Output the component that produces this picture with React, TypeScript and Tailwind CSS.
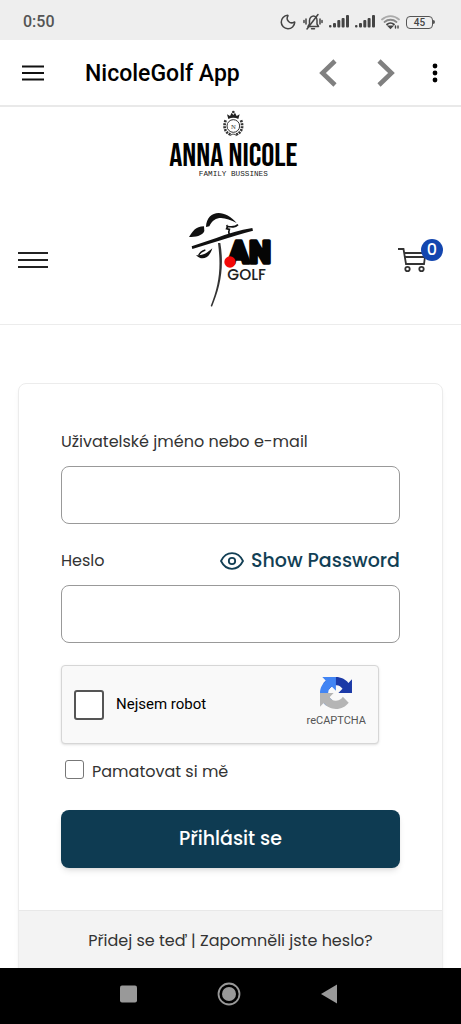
import { useState } from "react";
import { Moon } from "lucide-react";

function SignalIcon() {
  return (
    <svg className="h-4 w-5" viewBox="0 0 20 16" fill="#444">
      <rect x="0" y="11" width="2.500" height="2.500" rx="1" />
      <rect x="4" y="9" width="3" height="4.500" rx="1" />
      <rect x="8.300" y="6" width="3" height="7.500" rx="1" />
      <rect x="12.600" y="4" width="3" height="9.500" rx="1" />
      <rect x="17" y="1" width="3" height="12.500" rx="1" />
    </svg>
  );
}

function MuteIcon() {
  return (
    <svg className="h-[18px] w-5" viewBox="0 0 20 18" fill="none" stroke="#444" strokeWidth="1.500" strokeLinecap="round">
      <path d="M5 13.500h10.500L14 11V7.500C14 5 12.500 3 10.500 3S6.500 5 6.500 7.500V11z" strokeLinejoin="round" />
      <path d="M8.500 15.800h3M4 16L15 1.500M3 6v5M1 7.500v2M17 6v5M19 7.500v2" />
    </svg>
  );
}

function WifiIcon() {
  return (
    <svg className="h-4 w-[19px]" viewBox="0 0 19 16" fill="none" strokeWidth="1.800" strokeLinecap="round">
      <path d="M1 5.500C6 1 13 1 18 5.500" stroke="#aaa" />
      <path d="M3.500 8C7 5 12 5 15.500 8" stroke="#888" />
      <path d="M6 10.500c2-1.800 5-1.800 7 0" stroke="#444" />
      <path d="M8 12.500h3l-1.500 1.500z" fill="#444" stroke="#444" />
      <path d="M14.500 12v2M17 12v2" stroke="#444" strokeWidth="1.400" />
    </svg>
  );
}

function StatusBar() {
  return (
    <div className="flex h-10 shrink-0 items-center justify-between bg-[#eeeeee] pt-1 pr-[26px] pl-[23px] text-[#555]">
      <span className="text-base font-medium">0:50</span>
      <div className="flex items-center gap-[6px]">
        <Moon className="h-[18px] w-[18px] text-[#444]" />
        <MuteIcon />
        <SignalIcon />
        <SignalIcon />
        <WifiIcon />
        <div className="flex items-center">
          <span className="flex h-[13px] w-[27px] items-center justify-center rounded border border-[#555] text-[10px] font-medium text-[#444]">45</span>
          <span className="h-1 w-[2px] rounded-r bg-[#555]" />
        </div>
      </div>
    </div>
  );
}

function AppBar() {
  return (
    <header className="flex h-[67px] shrink-0 items-center border-b-2 border-[#e9e9e9] bg-white pr-[22px] pl-[22px]">
      <button type="button" aria-label="Menu">
        <svg className="h-4 w-[22px]" viewBox="0 0 22 16" stroke="#111" strokeWidth="2.200">
          <path d="M0 1.500h22M0 8h22M0 14.500h22" />
        </svg>
      </button>
      <h1 className="ml-[41px] pt-1 text-[23px] font-medium text-black">NicoleGolf App</h1>
      <div className="ml-auto flex items-center">
        <button type="button" aria-label="Back" className="mr-10">
          <svg className="h-7 w-[18px]" viewBox="0 0 18 28" fill="none" stroke="#808080" strokeWidth="4.600">
            <path d="M16 2L3.500 14 16 26" />
          </svg>
        </button>
        <button type="button" aria-label="Forward" className="mr-9">
          <svg className="h-7 w-[18px]" viewBox="0 0 18 28" fill="none" stroke="#808080" strokeWidth="4.600">
            <path d="M2 2l12.500 12L2 26" />
          </svg>
        </button>
        <button type="button" aria-label="More">
          <svg className="h-5 w-2" viewBox="0 0 8 20" fill="#000">
            <circle cx="4" cy="3" r="2.400" />
            <circle cx="4" cy="10" r="2.400" />
            <circle cx="4" cy="17" r="2.400" />
          </svg>
        </button>
      </div>
    </header>
  );
}

function FamilyLogo() {
  return (
    <svg className="h-[78px] w-[150px]" viewBox="-13 6 450 234">
      <g fill="none" stroke="#333">
        <circle cx="219" cy="63" r="19" strokeWidth="3" />
        <path d="M196 46c-7 18-4 38 18 44M242 46c7 18 4 38-18 44" strokeWidth="8" strokeDasharray="6 3" />
        <path d="M209 92c6-6 14-6 20 0" strokeWidth="3" />
      </g>
      <path d="M204 42l-4-14 9 5 5-10 5 7 5-7 5 10 9-5-4 14c-9-5-21-5-30 0z" fill="#222" />
      <circle cx="219" cy="21" r="4" fill="#333" />
      <text x="219" y="71" textAnchor="middle" className="font-['Liberation_Serif',serif] text-[20px]" fill="#333">N</text>
      <text x="219" y="184" textAnchor="middle" className="font-['Bebas_Neue','Liberation_Sans',sans-serif] text-[98px]" fill="#000">ANNA NICOLE</text>
      <text x="219" y="214" textAnchor="middle" className="font-['Liberation_Mono',monospace] text-[23px]" fill="#222">FAMILY BUSSINES</text>
    </svg>
  );
}

function GolfLogo() {
  return (
    <svg className="h-[110px] w-[110px]" viewBox="-13 0 330 330">
      <path d="M80 66C82 14 136 10 172 54C138 36 106 28 90 64z" fill="#111" />
      <path d="M74 64C48 64 40 80 29 96C47 96 70 93 75 78z" fill="#111" />
      <path d="M50 150C65 167 89 164 99 130C82 144 73 153 50 150z" fill="#111" />
      <path d="M78 135c-12 4-17 9-20 16" fill="none" stroke="#111" strokeWidth="4" />
      <path d="M37 124L111 99Q162 79 219 69L221 77Q175 89 117 108L39 132z" fill="#111" />
      <path d="M142 60q4 5 0 11l8 2q-3 6 0 16M142 64c13 2 24 5 34-5" fill="none" stroke="#111" strokeWidth="5" />
      <path d="M116 114L123 114C136 190 121 250 98 305L94 303C119 240 126 190 116 114z" fill="#333" />
      <text x="147" y="175" className="font-['Roboto','Liberation_Sans',sans-serif] text-[92px] font-black" fill="#050505" stroke="#050505" strokeWidth="10" strokeLinejoin="round">AN</text>
      <circle cx="152" cy="171" r="17" fill="#f40808" />
      <text x="144" y="225" className="font-['Poppins','Liberation_Sans',sans-serif] text-[46px] font-medium" fill="#222">GOLF</text>
    </svg>
  );
}

function ShopHeader() {
  return (
    <div className="border-b border-[#ececec] px-[18px] pb-[9px]">
      <div className="flex justify-center">
        <FamilyLogo />
      </div>
      <div className="mt-5 grid grid-cols-3 items-center">
        <button type="button" aria-label="Shop menu" className="justify-self-start">
          <svg className="h-[18px] w-[30px]" viewBox="0 0 30 18" stroke="#222" strokeWidth="2">
            <path d="M0 2h30M0 9h30M0 16h30" />
          </svg>
        </button>
        <div className="justify-self-center">
          <GolfLogo />
        </div>
        <button type="button" aria-label="Cart" className="relative w-[45px] justify-self-end">
          <svg className="h-[26px] w-[30px]" viewBox="0 0 30 26" fill="none" stroke="#333" strokeWidth="1.800">
            <path d="M0 2h5.500L8 17h18l1.500-11H6.200M6.800 10h20" />
            <circle cx="9.500" cy="22" r="2.200" />
            <circle cx="23.500" cy="22" r="2.200" />
          </svg>
          <span className="absolute -top-2 right-0 flex h-[22px] w-[22px] items-center justify-center rounded-full bg-[#1346af] font-['Poppins',Inter,sans-serif] text-base font-medium text-white">0</span>
        </button>
      </div>
    </div>
  );
}

function EyeIcon() {
  return (
    <svg className="h-6 w-6" viewBox="0 0 24 24" fill="none" stroke="currentColor" strokeWidth="1.800" strokeLinejoin="round">
      <path d="M1 12C3.500 7 7.500 4.200 12 4.200S20.500 7 23 12C20.500 17 16.500 19.800 12 19.800S3.500 17 1 12z" />
      <circle cx="12" cy="12" r="3.200" />
    </svg>
  );
}

function RecaptchaIcon() {
  return (
    <svg className="h-8 w-8" viewBox="0 0 64 64">
      <path
        d="M64 31.955l-.033-1.370V4.687l-7.160 7.160C50.948 4.674 42.033.093 32.050.093c-10.400 0-19.622 4.960-25.458 12.640l11.736 11.860a15.550 15.550 0 0 1 4.754-5.334c2.050-1.600 4.952-2.906 8.968-2.906.485 0 .860.057 1.135.163 4.976.393 9.288 3.140 11.828 7.124l-8.307 8.307L64 31.953"
        fill="#1c3aa7"
      />
      <path
        d="M31.862.094l-1.370.033H4.594l7.160 7.160C4.580 13.147 0 22.060 0 32.046c0 10.400 4.960 19.622 12.640 25.458L24.500 45.768a15.550 15.550 0 0 1-5.334-4.754c-1.600-2.050-2.906-4.952-2.906-8.968 0-.485.057-.860.163-1.135.393-4.976 3.140-9.288 7.124-11.828l8.307 8.307L31.860.095"
        fill="#4285f4"
      />
      <path
        d="M.001 32.045l.033 1.370v25.898l7.160-7.160c5.860 7.173 14.774 11.754 24.760 11.754 10.400 0 19.622-4.960 25.458-12.640l-11.736-11.860a15.550 15.550 0 0 1-4.754 5.334c-2.050 1.600-4.952 2.906-8.968 2.906-.485 0-.860-.057-1.135-.163-4.976-.393-9.288-3.140-11.828-7.124l8.307-8.307c-10.522.040-22.400.066-27.295-.005"
        fill="#b5b5b5"
      />
    </svg>
  );
}

function LoginCard() {
  const [showPassword, setShowPassword] = useState(false);

  return (
    <div className="mx-[18px] mt-[58px] overflow-hidden rounded-lg border border-[#ececec] bg-white font-['Poppins',Inter,sans-serif] text-[#333] shadow-md shadow-black/5">
      <form className="px-[42px] pt-[46px] pb-[42px]" onSubmit={(e) => e.preventDefault()}>
        <label htmlFor="username" className="block text-base leading-6">
          Uživatelské jméno nebo e-mail
        </label>
        <input id="username" type="text" className="mt-3 block h-[58px] w-full rounded-lg border border-[#999] bg-white px-4" />

        <div className="mt-[25px] flex items-center justify-between leading-6">
          <label htmlFor="password" className="text-base leading-6">Heslo</label>
          <button
            type="button"
            className="flex items-center gap-[7px] text-[19px] leading-6 font-medium text-[#123f55]"
            onClick={() => setShowPassword(!showPassword)}
          >
            <EyeIcon />
            Show Password
          </button>
        </div>
        <input
          id="password"
          type={showPassword ? "text" : "password"}
          className="mt-3 block h-[58px] w-full rounded-lg border border-[#999] bg-white px-4"
        />

        <div className="mt-[22px] flex h-[79px] max-w-[318px] items-center rounded-sm border border-[#d6d6d6] bg-[#f9f9f9] px-3 font-['Roboto',sans-serif] shadow-sm">
          <input id="robot" type="checkbox" className="h-[30px] w-[30px] appearance-none rounded-[3px] border-2 border-[#555] bg-white" />
          <label htmlFor="robot" className="ml-3 text-[15px] text-black">Nejsem robot</label>
          <div className="ml-auto flex flex-col items-center pb-1">
            <RecaptchaIcon />
            <span className="mt-1 text-[11px] leading-4 text-[#555]">reCAPTCHA</span>
          </div>
        </div>

        <div className="mt-4 flex items-start pl-1">
          <input id="remember" type="checkbox" className="h-[19px] w-[19px] appearance-none rounded-[3px] border border-[#777] bg-white" />
          <label htmlFor="remember" className="ml-2 text-base leading-6">Pamatovat si mě</label>
        </div>

        <button type="submit" className="mt-[26px] h-[58px] w-full rounded-lg bg-[#0e3b52] text-[19px] font-medium text-white shadow-md">
          Přihlásit se
        </button>
      </form>
      <div className="border-t border-[#e8e8e8] bg-[#f3f3f3] pt-[18px] pb-6 text-center text-base leading-6">
        <a href="#register">Přidej se teď</a> | <a href="#lost-password">Zapomněli jste heslo?</a>
      </div>
    </div>
  );
}

function NavigationBar() {
  return (
    <nav className="flex h-14 shrink-0 items-center justify-center gap-[76px] bg-black pr-1 pb-1">
      <button type="button" aria-label="Recent apps">
        <svg className="h-6 w-6" viewBox="0 0 24 24" fill="#999">
          <rect x="3" y="3.500" width="17" height="17" rx="2" />
        </svg>
      </button>
      <button type="button" aria-label="Home">
        <svg className="h-6 w-6" viewBox="0 0 24 24" fill="#999">
          <circle cx="12" cy="12" r="10.500" fill="none" stroke="#999" strokeWidth="1.800" />
          <circle cx="12" cy="12" r="7" />
        </svg>
      </button>
      <button type="button" aria-label="Back">
        <svg className="h-6 w-6" viewBox="0 0 24 24" fill="#999">
          <path d="M4 12L20 2.500v19z" />
        </svg>
      </button>
    </nav>
  );
}

export default function App() {
  return (
    <div className="flex h-screen flex-col bg-white font-['Roboto',sans-serif]">
      <StatusBar />
      <AppBar />
      <main className="min-h-0 flex-1 overflow-y-auto pb-10 [scrollbar-width:none]">
        <ShopHeader />
        <LoginCard />
      </main>
      <NavigationBar />
    </div>
  );
}
